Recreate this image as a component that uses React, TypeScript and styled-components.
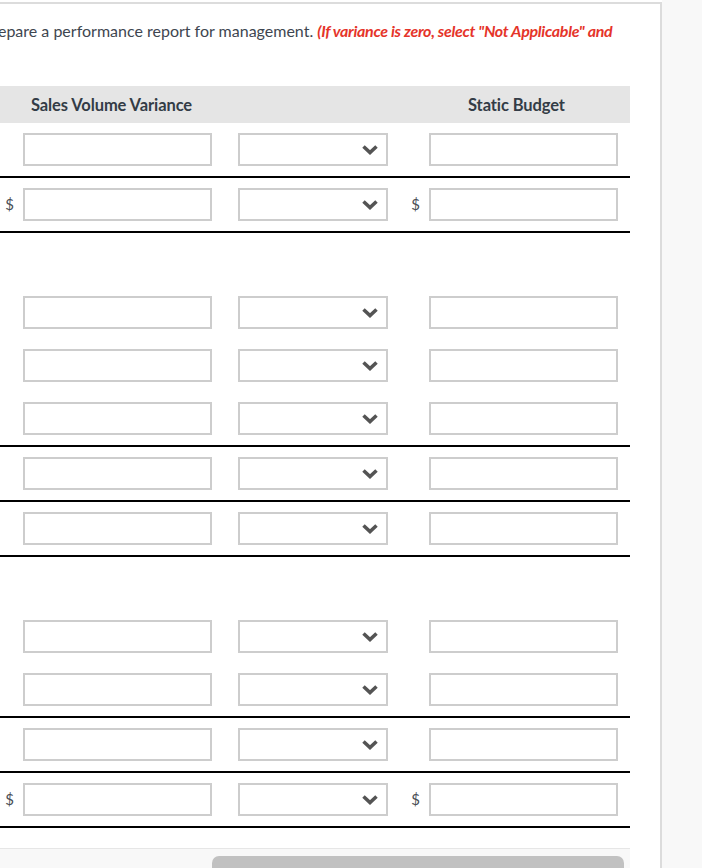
import React from 'react';
import styled, { createGlobalStyle } from 'styled-components';

const GlobalStyle = createGlobalStyle`
	html, body {
		margin: 0;
		padding: 0;
		background: #ffffff;
		font-family: Lato, "Open Sans", "Liberation Sans", sans-serif;
	}
`;

const Page = styled.div`
	display: flex;
	width: 702px;
	height: 868px;
	overflow: hidden;
`;

const Panel = styled.div`
	width: 660px;
	margin-top: 2px;
	border-top: 2px solid #dcdcdc;
	border-right: 2px solid #dcdcdc;
	background: #ffffff;
	display: flex;
	flex-direction: column;
	& > * {
		flex-shrink: 0;
	}
`;

const Side = styled.div`
	flex: 1;
	background: #f8f8f8;
`;

const Instruction = styled.p`
	margin: 0;
	padding-top: 17px;
	width: 630px;
	height: 20px;
	line-height: 20px;
	font-size: 16px;
	color: #3e4650;
	white-space: nowrap;
	overflow: hidden;
	text-indent: -17px;
`;

const Note = styled.span`
	color: #e5342a;
	font-weight: 700;
	font-style: italic;
	letter-spacing: -0.3px;
`;

const Table = styled.div`
	margin-top: 45px;
	width: 630px;
`;

const Row = styled.div<{ $line?: boolean }>`
	display: grid;
	grid-template-columns: 23px 189px 26px 150px 41px 189px 12px;
	align-items: start;
	padding-top: 10px;
	box-sizing: border-box;
	border-bottom: ${(p) => (p.$line ? '2px solid #000000' : 'none')};
	height: ${(p) => (p.$line ? '55px' : '53px')};
`;

const HeaderRow = styled.div`
	display: grid;
	grid-template-columns: 23px 189px 26px 150px 41px 189px 12px;
	align-items: center;
	height: 37px;
	background: #e5e5e5;
	font-size: 16.5px;
	font-weight: 700;
	color: #333c46;
	letter-spacing: -0.1px;
`;

const HeadCell = styled.div<{ $col: number; $pad: number }>`
	grid-column: ${(p) => p.$col};
	padding-left: ${(p) => p.$pad}px;
	white-space: nowrap;
`;

const Dollar = styled.span`
	height: 33px;
	line-height: 33px;
	font-size: 15px;
	color: #4a4f55;
	text-align: right;
	padding-right: 9px;
`;

const Field = styled.input`
	box-sizing: border-box;
	width: 100%;
	height: 33px;
	margin: 0;
	border: 2px solid #cdcdcd;
	border-radius: 0;
	background: #ffffff;
	font: inherit;
	outline: none;
`;

const Select = styled.div`
	box-sizing: border-box;
	height: 33px;
	border: 2px solid #cdcdcd;
	display: flex;
	align-items: center;
	justify-content: flex-end;
	padding-right: 7px;
	background: #ffffff;
`;

const Blank = styled.span``;

const ScrollTrack = styled.div`
	margin-top: 20px;
	width: 630px;
	flex: 1;
	border-top: 1px solid #e6e6e6;
	background: #f8f8f8;
	padding-top: 7px;
	padding-left: 212px;
	box-sizing: border-box;
`;

const Thumb = styled.div`
	width: 412px;
	height: 20px;
	border-radius: 7px;
	background: #c1c1c1;
`;

const Chevron = () => (
	<svg width="18" height="11" viewBox="0 0 18 11">
		<path
			d="M2.5 2.5 L9 8.5 L15.5 2.5"
			fill="none"
			stroke="#545454"
			strokeWidth="3.6"
			strokeLinejoin="miter"
		/>
	</svg>
);

type RowKind = 'plain' | 'dollar' | 'empty';

const rows: { kind: RowKind; line?: boolean }[] = [
	{ kind: 'plain', line: true },
	{ kind: 'dollar', line: true },
	{ kind: 'empty' },
	{ kind: 'plain' },
	{ kind: 'plain' },
	{ kind: 'plain', line: true },
	{ kind: 'plain', line: true },
	{ kind: 'plain', line: true },
	{ kind: 'empty' },
	{ kind: 'plain' },
	{ kind: 'plain', line: true },
	{ kind: 'plain', line: true },
	{ kind: 'dollar', line: true },
];

const ReportRow = ({ kind, line }: { kind: RowKind; line?: boolean }) => {
	if (kind === 'empty') {
		return <Row $line={line} />;
	}
	const sign = kind === 'dollar' ? '$' : '';
	return (
		<Row $line={line}>
			<Dollar>{sign}</Dollar>
			<Field type="text" />
			<Blank />
			<Select>
				<Chevron />
			</Select>
			<Dollar>{sign}</Dollar>
			<Field type="text" />
			<Blank />
		</Row>
	);
};

export default function App() {
	return (
		<Page>
			<GlobalStyle />
			<Panel>
				<Instruction>
					Prepare a performance report for management.{' '}
					<Note>(If variance is zero, select "Not Applicable" and</Note>
				</Instruction>
				<Table>
					<HeaderRow>
						<HeadCell $col={2} $pad={8}>
							Sales Volume Variance
						</HeadCell>
						<HeadCell $col={6} $pad={39}>
							Static Budget
						</HeadCell>
					</HeaderRow>
					{rows.map((r, i) => (
						<ReportRow key={i} kind={r.kind} line={r.line} />
					))}
				</Table>
				<ScrollTrack>
					<Thumb />
				</ScrollTrack>
			</Panel>
			<Side />
		</Page>
	);
}
